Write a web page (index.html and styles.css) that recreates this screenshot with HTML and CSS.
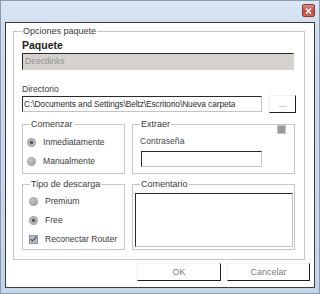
FILE: index.html
```html
<!DOCTYPE html>
<html lang="es">
<head>
  <meta charset="UTF-8" />
  <title>Opciones paquete</title>
  <link rel="stylesheet" href="styles.css">
</head>
<body>
  <div class="window">
    <div class="titlebar">
      <span class="close">
        <svg width="7" height="6" viewBox="0 0 7 6"><path d="M1 0.5 L6 5.5 M6 0.5 L1 5.5" stroke="#fff" stroke-width="1.6"/></svg>
      </span>
    </div>

    <div class="client">
      <fieldset class="group main">
        <legend>Opciones paquete</legend>
        <div class="heading">Paquete</div>
        <div class="field readonly">Directlinks</div>
        <div class="label">Directorio</div>
        <div class="path-row">
          <div class="field path">C:\Documents and Settings\Beltz\Escritorio\Nueva carpeta</div>
          <button class="btn dots">...</button>
        </div>

        <div class="grid">
          <fieldset class="group options">
            <legend>Comenzar</legend>
            <div class="opt"><span class="radio on"></span>Inmediatamente</div>
            <div class="opt"><span class="radio"></span>Manualmente</div>
          </fieldset>

          <fieldset class="group extraer">
            <legend>Extraer</legend>
            <span class="legend-check"><span class="check off"></span></span>
            <div class="label pass-label">Contraseña</div>
            <div class="field pass"></div>
          </fieldset>

          <fieldset class="group options tipo">
            <legend>Tipo de descarga</legend>
            <div class="opt"><span class="radio"></span>Premium</div>
            <div class="opt"><span class="radio on"></span>Free</div>
            <div class="opt"><span class="check on">
              <svg width="7" height="6" viewBox="0 0 7 6"><path d="M0.5 3 L2.5 5 L6.5 0.8" stroke="#5a6470" stroke-width="1.4" fill="none"/></svg>
            </span>Reconectar Router</div>
          </fieldset>

          <fieldset class="group comentario">
            <legend>Comentario</legend>
            <div class="field memo"></div>
          </fieldset>
        </div>
      </fieldset>

      <div class="actions">
        <button class="btn action ok">OK</button>
        <button class="btn action">Cancelar</button>
      </div>
    </div>
  </div>
</body>
</html>
```

FILE: styles.css
```css
body {
  margin: 0;
  font-family: "Liberation Sans", Arial, sans-serif;
  font-size: 8.6px;
  color: #3a3a3a;
}
.window {
  box-sizing: border-box;
  width: 320px;
  height: 294px;
  border: 1px solid #8d9aab;
  background: linear-gradient(#dae6f4, #cbdcef 12%, #c3d5ea);
  padding: 0 4px 5px 4px;
  display: flex;
  flex-direction: column;
}
.titlebar {
  height: 21px;
  display: flex;
  justify-content: flex-end;
  align-items: flex-start;
  padding-top: 3px;
  box-sizing: border-box;
}
.close {
  width: 13px;
  height: 13px;
  box-sizing: border-box;
  border: 1px solid #8e3a30;
  border-radius: 2px;
  background: linear-gradient(#e08a7c, #c44a38 55%, #d06a56);
  display: flex;
  align-items: center;
  justify-content: center;
}
.client {
  flex: 1;
  background: #fff;
  border: 1px solid #3c3c3c;
  padding: 2px 0 0 7px;
  display: flex;
  flex-direction: column;
}
.group {
  margin: 0;
  min-width: 0;
  box-sizing: border-box;
  border: 1px solid #c6c6c6;
  padding: 0 4px;
}
.group legend {
  padding: 0 1px;
  margin-left: 3px;
  line-height: 12px;
  font-size: 9px;
  color: #3a3a3a;
}
.main {
  width: 292px;
  padding: 2px 8px 9px 8px;
}
.main > legend {
  margin-left: 0;
}
.heading {
  font-size: 10.5px;
  font-weight: bold;
  line-height: 12px;
  color: #1e1e1e;
}
.label {
  line-height: 12px;
}
.field {
  box-sizing: border-box;
  background: #fff;
  border: 1px solid #c4c4c4;
  border-top-color: #2a2a2a;
  border-left-color: #2a2a2a;
  padding: 0 2px;
  white-space: nowrap;
  overflow: hidden;
}
.readonly {
  width: 272px;
  height: 17px;
  margin-top: 2px;
  margin-bottom: 13px;
  background: #d6d3ce;
  border-right-color: #d6d3ce;
  border-bottom-color: #d6d3ce;
  color: #8e8e8e;
  line-height: 15px;
}
.path-row {
  display: flex;
  align-items: center;
  gap: 7px;
  height: 18px;
}
.path {
  width: 240px;
  height: 16px;
  line-height: 14px;
  font-size: 8.4px;
  letter-spacing: -0.1px;
  padding-left: 1px;
  color: #2e2e2e;
}
.btn {
  box-sizing: border-box;
  background: #fff;
  border: 1px solid #f0f0f0;
  border-right-color: #1e1e1e;
  border-bottom-color: #1e1e1e;
  font-family: inherit;
  font-size: 9px;
  color: #7a7a7a;
  padding: 0;
}
.dots {
  width: 27px;
  height: 18px;
  line-height: 14px;
}
.grid {
  display: grid;
  grid-template-columns: 103px 163px;
  grid-template-rows: 56px 72px;
  column-gap: 7px;
  row-gap: 4px;
  margin-top: 5px;
}
.options {
  padding-top: 6px;
  display: flex;
  flex-direction: column;
  gap: 7px;
}
.tipo {
  padding-top: 5px;
}
.tipo .opt {
  padding-left: 2px;
}
.opt {
  display: flex;
  align-items: center;
  gap: 7px;
  height: 12px;
  line-height: 12px;
  white-space: nowrap;
}
.radio {
  width: 9px;
  height: 9px;
  border-radius: 50%;
  background: radial-gradient(circle at 40% 40%, #c8c8c8, #8e8e8e);
  flex: none;
}
.radio.on {
  background: radial-gradient(circle, #5e5e5e 0 1.6px, #bdbdbd 2.2px, #8e8e8e);
}
.check {
  width: 9px;
  height: 9px;
  box-sizing: border-box;
  flex: none;
  display: flex;
  align-items: center;
  justify-content: center;
}
.check.on {
  background: #b4bcc6;
  border: 1px solid #8c96a2;
}
.check.off {
  background: #9a9a9a;
  border: 1px solid #c4c4c4;
}
.extraer {
  position: relative;
}
.legend-check {
  position: absolute;
  top: -5px;
  right: 5px;
  background: #fff;
  padding: 0 3px;
}
.pass-label {
  margin: 5px 0 0 3px;
  color: #4a4a4a;
}
.pass {
  width: 121px;
  height: 16px;
  margin: 4px 0 0 4px;
}
.comentario {
  padding: 3px 1px 1px 2px;
}
.comentario legend {
  margin-left: 5px;
}
.memo {
  width: 158px;
  height: 54px;
}
.actions {
  display: flex;
  justify-content: flex-end;
  gap: 6px;
  margin-top: 3px;
  padding-right: 4px;
}
.action {
  height: 18px;
  width: 83px;
}
.ok {
  width: 84px;
}
```
